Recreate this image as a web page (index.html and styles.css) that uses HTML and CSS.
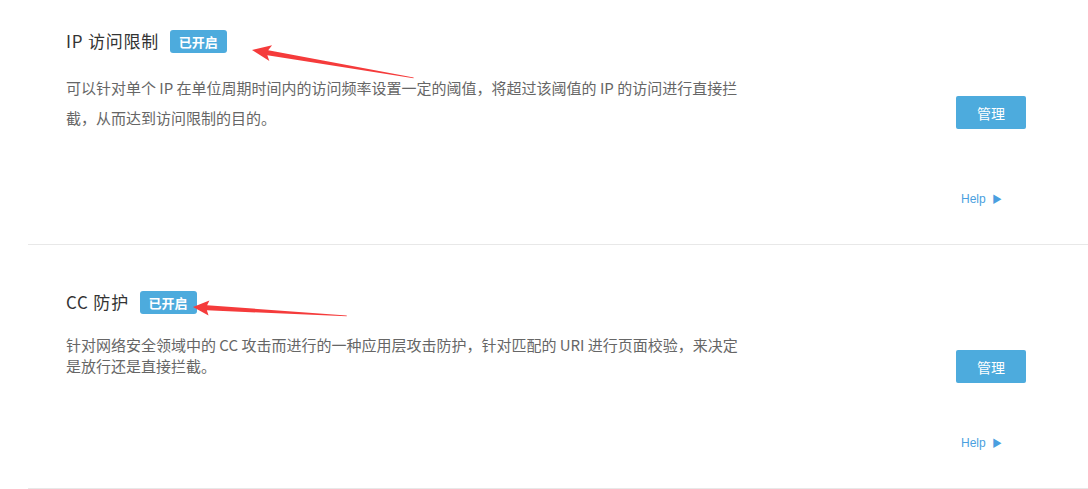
FILE: index.html
```html
<!DOCTYPE html>
<html lang="zh-CN">
<head>
    <meta charset="UTF-8">
    <meta name="viewport" content="width=device-width, initial-scale=1.0">
    <title>安全防护</title>
    <link rel="stylesheet" href="styles.css">
</head>
<body>
    <!-- IP access limit -->
    <div class="rule rule-ip">
        <div class="rule-info">
            <h3 class="rule-title">IP 访问限制 <span class="badge">已开启</span></h3>
            <p class="rule-desc">可以针对单个 IP 在单位周期时间内的访问频率设置一定的阈值，将超过该阈值的 IP 的访问进行直接拦截，从而达到访问限制的目的。</p>
        </div>
        <div class="rule-side">
            <button class="btn">管理</button>
            <a href="#" class="help">Help <i>&#9654;</i></a>
        </div>
    </div>

    <!-- CC protection -->
    <div class="rule rule-cc">
        <div class="rule-info">
            <h3 class="rule-title">CC 防护 <span class="badge">已开启</span></h3>
            <p class="rule-desc">针对网络安全领域中的 CC 攻击而进行的一种应用层攻击防护，针对匹配的 URI 进行页面校验，来决定是放行还是直接拦截。</p>
        </div>
        <div class="rule-side">
            <button class="btn">管理</button>
            <a href="#" class="help">Help <i>&#9654;</i></a>
        </div>
    </div>

    <!-- Annotation arrows -->
    <svg class="marks" width="1088" height="489" viewBox="0 0 1088 489">
        <polygon transform="translate(252 50) rotate(9.8)" points="0,0 19,-8 16,-2.6 164,-0.4 164,0.4 16,2.6 19,8"/>
        <polygon transform="translate(193 307) rotate(3.3)" points="0,0 16,-7.5 14,-2.5 154,-0.4 154,0.4 14,2.5 16,7.5"/>
    </svg>
</body>
</html>
```

FILE: styles.css
```css
:root {
    --blue: #4dabdd;
    --text: #333;
    --muted: #666;
    --line: #e8e8e8;
    --mark: #f53b3b;
}

* {
    margin: 0;
    padding: 0;
    box-sizing: border-box;
}

body {
    font-family: "Noto Sans CJK SC", sans-serif;
    background: #fff;
    color: var(--text);
    width: 1088px;
    height: 489px;
    overflow: hidden;
    position: relative;
}

/* Rule rows */
.rule {
    display: flex;
    margin-left: 28px;
    padding: 0 62px 36px 38px;
    border-bottom: 1px solid var(--line);
}

.rule-ip { height: 245px; padding-top: 29px; }
.rule-cc { height: 244px; padding-top: 45px; }

.rule-info {
    flex: 1;
}

.rule-title {
    display: flex;
    align-items: center;
    font-size: 17px;
    font-weight: normal;
    line-height: 24px;
    height: 24px;
    letter-spacing: 0.8px;
    color: var(--text);
    white-space: pre;
}

.badge {
    display: inline-block;
    margin-left: 6px;
    height: 23px;
    padding: 0 9px;
    font-size: 13px;
    font-weight: bold;
    line-height: 23px;
    letter-spacing: 0;
    color: #fff;
    background: var(--blue);
    border-radius: 3px;
}

.rule-desc {
    width: 684px;
    margin-top: 20px;
    font-size: 15px;
    color: var(--muted);
}

.rule-ip .rule-desc { line-height: 30px; }
.rule-cc .rule-desc { line-height: 21px; }

/* Right column */
.rule-side {
    display: flex;
    flex-direction: column;
    width: 70px;
}

.rule-ip .rule-side { padding-top: 67px; }
.rule-cc .rule-side { padding-top: 60px; }

.btn {
    width: 70px;
    height: 33px;
    border: none;
    border-radius: 2px;
    background: var(--blue);
    color: #fff;
    font-family: "Noto Sans CJK SC", sans-serif;
    font-size: 14px;
}

.help {
    margin-top: auto;
    margin-left: 5px;
    font-family: "Liberation Sans", Arial, sans-serif;
    font-size: 12px;
    line-height: 16px;
    color: #4a9fe0;
    text-decoration: none;
    white-space: nowrap;
}

.help i {
    font-style: normal;
    font-size: 10px;
    margin-left: 3px;
}

/* Screenshot annotation */
.marks {
    position: absolute;
    top: 0;
    left: 0;
    pointer-events: none;
    fill: var(--mark);
}
```
